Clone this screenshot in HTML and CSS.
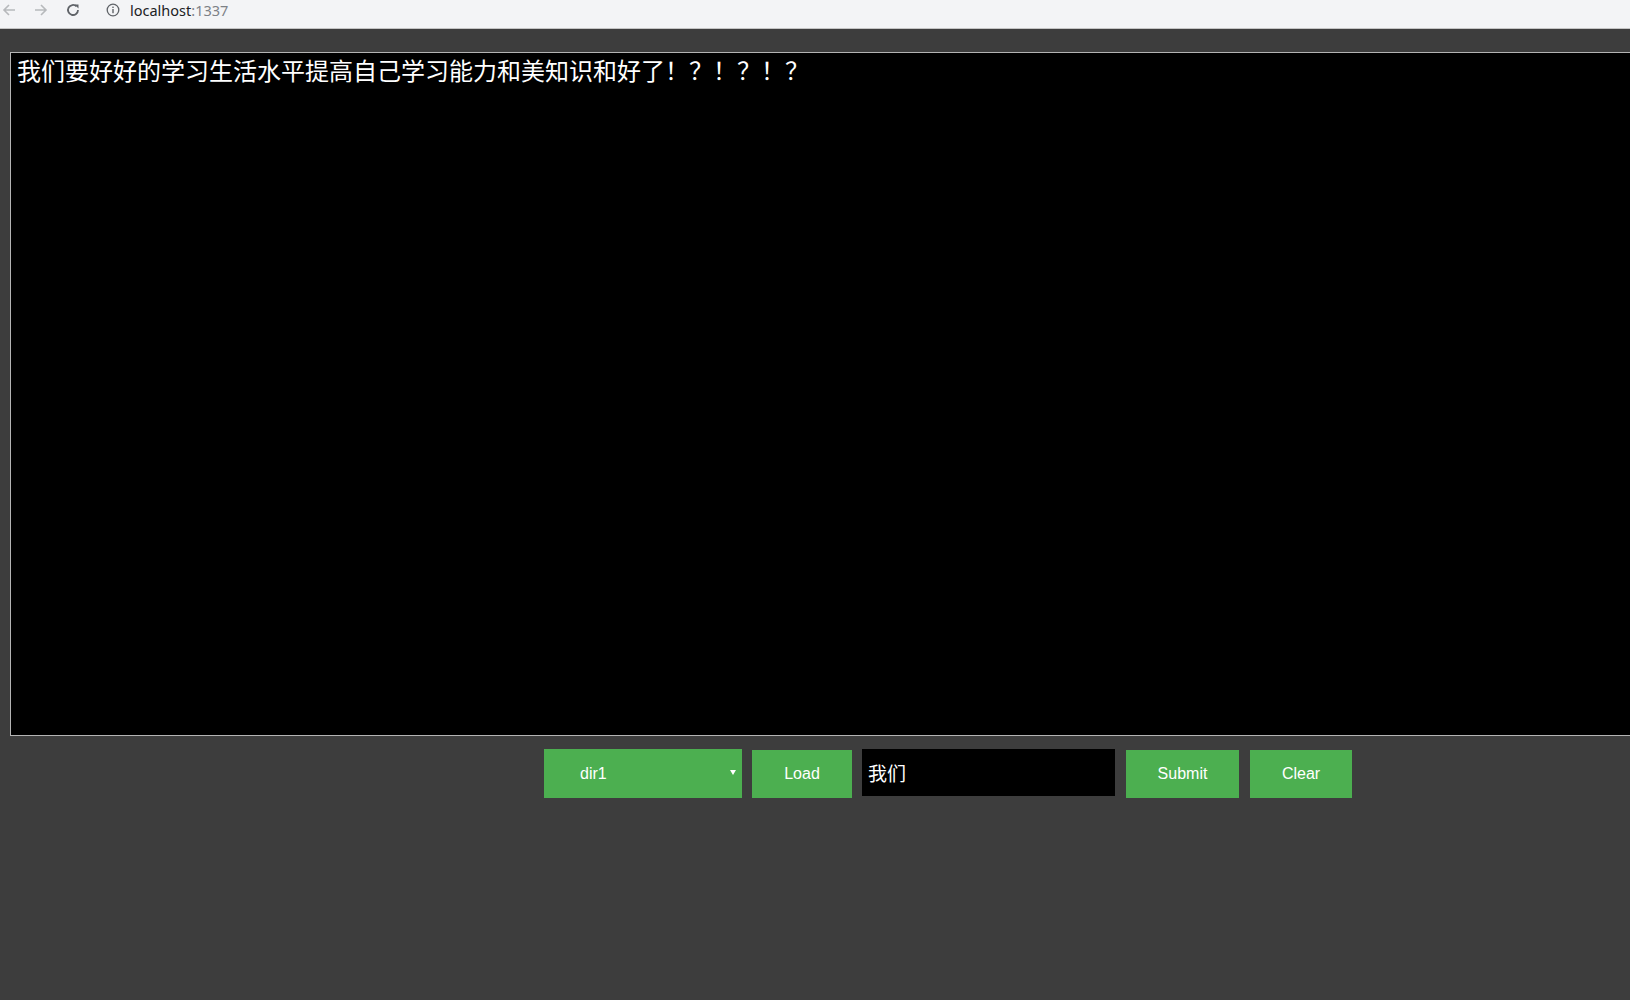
FILE: index.html
```html
<!DOCTYPE html>
<html lang="zh">
<head>
<meta charset="utf-8">
<title>localhost:1337</title>
<link rel="stylesheet" href="styles.css">
</head>
<body>
<div class="chrome">
  <svg class="ic" width="16" height="16" viewBox="0 0 16 16"><path d="M14 8H3M8 3L3 8l5 5" fill="none" stroke="#b7b9bc" stroke-width="1.6"/></svg>
  <svg class="ic fwd" width="16" height="16" viewBox="0 0 16 16"><path d="M2 8h11M8 3l5 5-5 5" fill="none" stroke="#b7b9bc" stroke-width="1.6"/></svg>
  <svg class="ic reload" width="16" height="16" viewBox="0 0 16 16"><path d="M13 8a5 5 0 1 1-1.5-3.6" fill="none" stroke="#5f6368" stroke-width="1.8"/><path d="M9.5 2.5h4v4z" fill="#5f6368"/></svg>
  <svg class="ic info" width="14" height="14" viewBox="0 0 14 14"><circle cx="7" cy="7" r="5.8" fill="none" stroke="#5f6368" stroke-width="1.3"/><rect x="6.3" y="6" width="1.4" height="4.2" fill="#5f6368"/><rect x="6.3" y="3.6" width="1.4" height="1.4" fill="#5f6368"/></svg>
  <span class="url"><span class="host">localhost</span><span class="port">:1337</span></span>
</div>
<div class="page">
  <div class="screen">我们要好好的学习生活水平提高自己学习能力和美知识和好了！？！？！？</div>
  <div class="controls">
    <div class="select"><span>dir1</span><span class="arrow"></span></div>
    <button class="btn load">Load</button>
    <div class="input">我们</div>
    <button class="btn submit">Submit</button>
    <button class="btn clear">Clear</button>
  </div>
</div>
</body>
</html>
```
FILE: styles.css
```css
html, body {
  margin: 0;
  padding: 0;
  height: 100%;
  overflow: hidden;
  background: #3d3d3d;
}
.chrome {
  height: 20px;
  padding: 0 0 8px 1px;
  background: #f3f4f6;
  border-bottom: 1px solid #c4c4c4;
  display: flex;
  align-items: center;
  box-sizing: content-box;
  font-family: "Segoe UI", "Noto Sans", "Liberation Sans", sans-serif;
}
.ic { display: block; flex: none; }
.ic.fwd { margin-left: 16px; }
.ic.reload { margin-left: 16px; }
.ic.info { margin-left: 25px; }
.url {
  margin-left: 10px;
  font-size: 14.5px;
  line-height: 20px;
}
.host { color: #202124; }
.port { color: #7d8186; }
.page {
  padding: 23px 0 0 10px;
  overflow: hidden;
}
.screen {
  width: 1900px;
  height: 684px;
  background: #000;
  border: 1px solid #b4b4b4;
  color: #fff;
  font-family: "Noto Sans CJK SC", sans-serif;
  font-size: 24px;
  line-height: 32px;
  padding: 1px 0 0 6px;
  box-sizing: border-box;
}
.controls {
  display: flex;
  align-items: flex-start;
  margin-top: 13px;
  padding-left: 534px;
  font-family: "Liberation Sans", Arial, sans-serif;
}
.select {
  width: 198px;
  height: 49px;
  background: #4caf50;
  color: #fff;
  font-size: 16px;
  display: flex;
  align-items: center;
  padding-left: 36px;
  box-sizing: border-box;
  position: relative;
}
.arrow {
  position: absolute;
  left: 186px;
  top: 21px;
  width: 0;
  height: 0;
  border-left: 3px solid transparent;
  border-right: 3px solid transparent;
  border-top: 5px solid #fff;
}
.btn {
  height: 48px;
  margin-top: 1px;
  border: none;
  background: #4caf50;
  color: #fff;
  font-family: "Liberation Sans", Arial, sans-serif;
  font-size: 16px;
  padding: 0;
}
.load { width: 100px; margin-left: 10px; }
.input {
  width: 253px;
  height: 47px;
  margin-left: 10px;
  background: #000;
  color: #fff;
  font-family: "Noto Sans CJK SC", sans-serif;
  font-size: 19px;
  line-height: 47px;
  padding-left: 6px;
  box-sizing: border-box;
}
.submit { width: 113px; margin-left: 11px; }
.clear { width: 102px; margin-left: 11px; }
```
